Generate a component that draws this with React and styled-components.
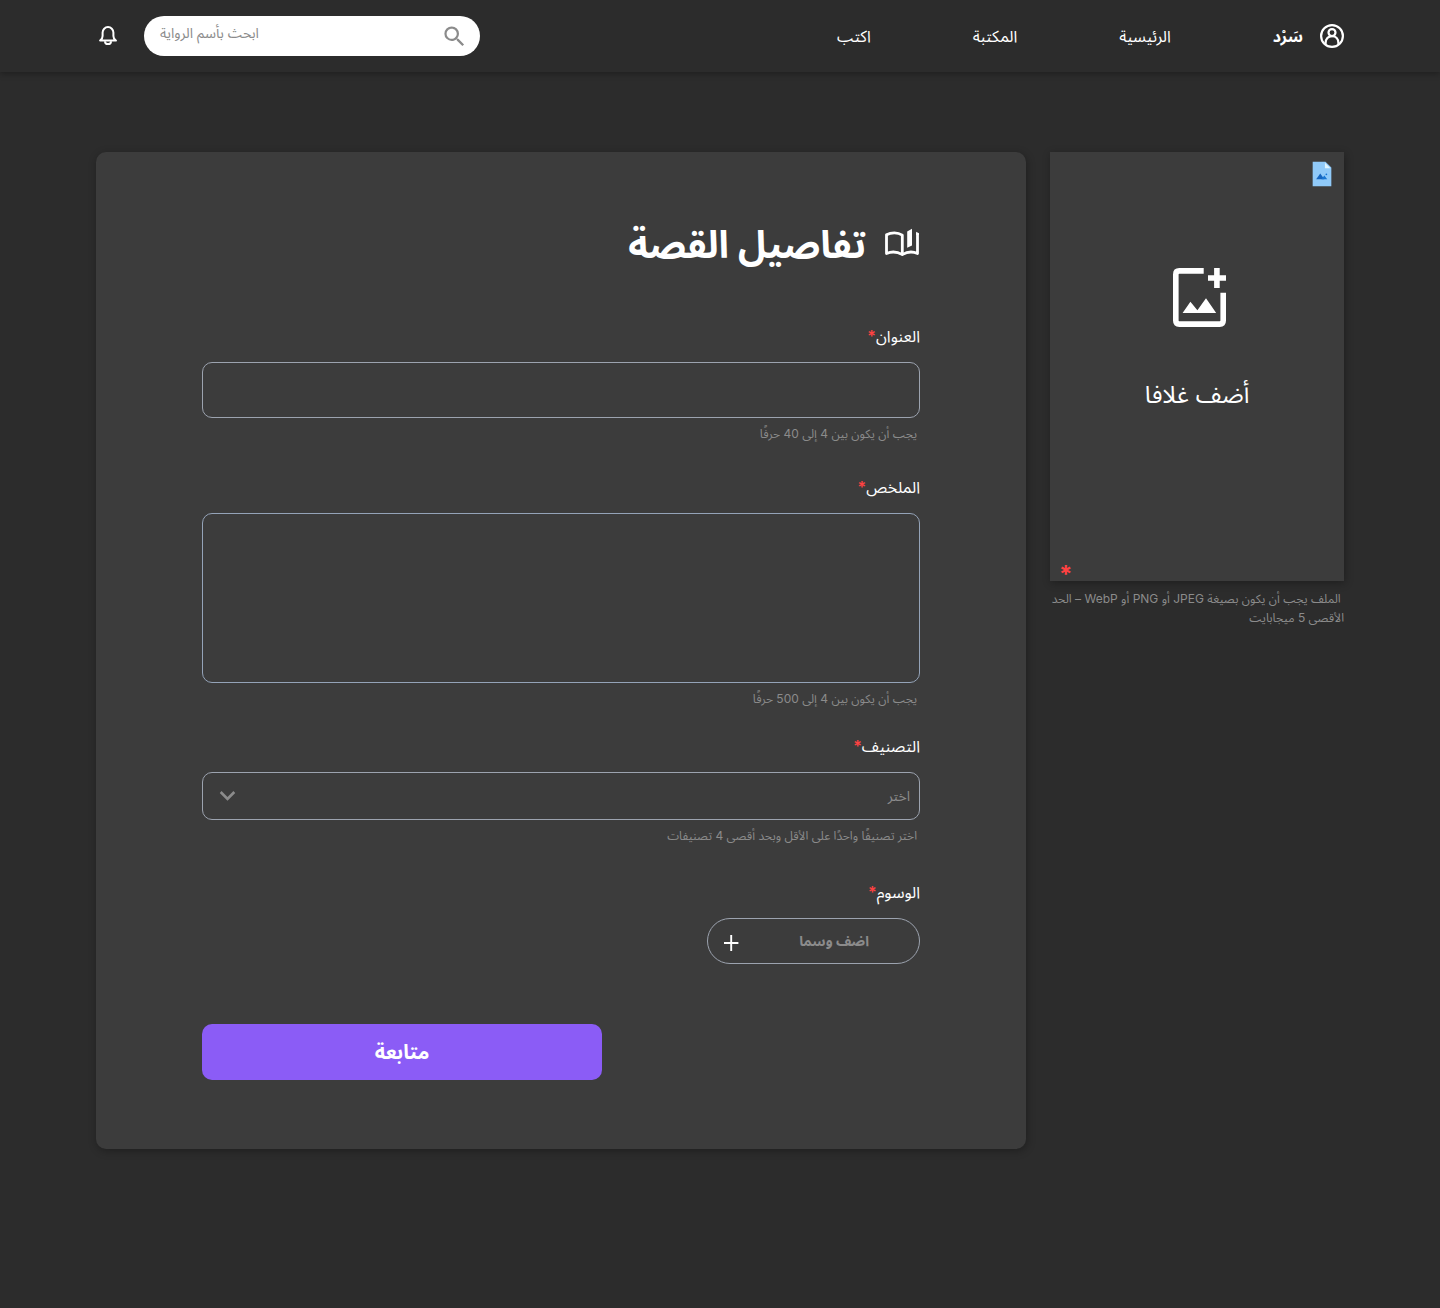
import React from "react";
import styled, { createGlobalStyle } from "styled-components";
import { MdSearch, MdKeyboardArrowDown } from "react-icons/md";
import { FcImageFile } from "react-icons/fc";

const Global = createGlobalStyle`
  * { box-sizing: border-box; }
  body { margin: 0; background: #2c2c2c; }
  svg { display: block; flex: none; }
  button, input, textarea { font-family: inherit; outline: none; }
`;

const Page = styled.div`
  min-height: 1308px;
  background: #2c2c2c;
  color: #fff;
  font-family: Inter, "Noto Sans Arabic", "Noto Sans", "DejaVu Sans", sans-serif;
`;

const Header = styled.header`
  height: 72px;
  padding: 0 96px;
  display: flex;
  align-items: center;
  justify-content: space-between;
  box-shadow: 0 2px 6px rgba(0, 0, 0, 0.3);
`;

const Nav = styled.nav`
  display: flex;
  align-items: center;
  gap: 102px;
  font-size: 16px;
  line-height: 22px;
`;

const NavLink = styled.a`
  color: #fff;
  text-decoration: none;
  padding-bottom: 1px;
`;

const Brand = styled.div`
  display: flex;
  align-items: center;
  gap: 17px;
  font-weight: 700;
`;

const Tools = styled.div`
  display: flex;
  align-items: center;
  gap: 24px;
`;

const Search = styled.label`
  width: 336px;
  height: 40px;
  padding: 0 12px 0 16px;
  display: flex;
  align-items: center;
  justify-content: space-between;
  direction: ltr;
  border-radius: 20px;
  background: #fff;
  color: #8b8b8b;
`;

const SearchText = styled.span`
  font-size: 14px;
  line-height: 20px;
  padding-bottom: 6px;
`;

const BellBox = styled.div`
  width: 24px;
  height: 24px;
  display: flex;
  align-items: center;
  justify-content: center;
`;

const Main = styled.main`
  display: flex;
  align-items: flex-start;
  gap: 24px;
  padding: 80px 96px;
`;

const Aside = styled.aside`
  width: 294px;
`;

const Cover = styled.div`
  position: relative;
  height: 429px;
  padding-top: 116px;
  display: flex;
  flex-direction: column;
  align-items: center;
  gap: 53px;
  background: #3c3c3c;
  box-shadow: 1px 2px 8px rgba(0, 0, 0, 0.3);
`;

const CoverArt = styled.div`
  padding-left: 4px;
`;

const CoverText = styled.span`
  font-size: 24px;
  line-height: 30px;
`;

const FileBadge = styled.span`
  position: absolute;
  top: 8px;
  right: 8px;
`;

const CoverStar = styled.span`
  position: absolute;
  left: 9px;
  bottom: -9px;
  color: #ff4242;
  font-size: 24px;
  font-weight: 700;
  line-height: 30px;
`;

const Hint = styled.p`
  margin: ${(p) => p.$top || 6}px 0 0;
  padding-right: ${(p) => p.$inset || 0}px;
  font-size: 12px;
  line-height: 19px;
  color: #8b8b8b;
`;

const Card = styled.section`
  width: 930px;
  height: 997px;
  padding: 67px 106px;
  display: flex;
  flex-direction: column;
  border-radius: 10px;
  background: #3c3c3c;
  box-shadow: 1px 2px 8px rgba(0, 0, 0, 0.3);
`;

const Title = styled.h1`
  margin: 0;
  display: flex;
  align-items: center;
  gap: 18px;
  font-size: 37.9px;
  font-weight: 700;
  line-height: 50px;

  svg {
    margin-bottom: 2px;
  }
`;

const Field = styled.div`
  margin-top: ${(p) => p.$gap}px;
`;

const Label = styled.div`
  font-size: 16px;
  line-height: 24px;
  margin-bottom: 14px;
`;

const Star = styled.span`
  color: #ff4242;
  font-weight: 600;
`;

const TextInput = styled.input`
  display: block;
  width: 100%;
  height: 56px;
  padding: 0 10px;
  border: 1px solid #9ca3af;
  border-radius: 10px;
  background: transparent;
  color: #fff;
  font-size: 16px;
`;

const TextArea = styled.textarea`
  display: block;
  width: 100%;
  height: 170px;
  padding: 10px;
  border: 1px solid #94a3b8;
  border-radius: 10px;
  background: transparent;
  color: #fff;
  font-size: 16px;
  resize: none;
`;

const Select = styled.button`
  width: 100%;
  height: 48px;
  padding: 0 9px;
  display: flex;
  align-items: center;
  justify-content: space-between;
  border: 1px solid #9ca3af;
  border-radius: 10px;
  background: transparent;
  color: #8b8b8b;
  font-size: 14px;

  svg {
    margin-bottom: 2px;
  }
`;

const TagButton = styled.button`
  width: 213px;
  height: 46px;
  padding: 1px 50px 0 16px;
  display: flex;
  align-items: center;
  justify-content: space-between;
  border: 1px solid #9ca3af;
  border-radius: 23px;
  background: transparent;
  color: #8b8b8b;
  font-size: 14px;
  font-weight: 700;

  svg {
    margin-top: 3px;
  }
`;

const Submit = styled.button`
  align-self: flex-end;
  width: 400px;
  height: 56px;
  margin-top: 60px;
  padding: 2px 0 0;
  border: 0;
  border-radius: 10px;
  background: #8b5cf6;
  color: #fff;
  font-size: 20px;
  font-weight: 700;
`;

const UserIcon = () => (
  <svg width="24" height="24" viewBox="0 0 24 24" fill="none" stroke="#fff" strokeWidth="2.2">
    <circle cx="12" cy="12" r="10.9" />
    <circle cx="12" cy="8.6" r="3.5" />
    <path d="M5.6 20.6V19C5.6 15 8.2 12.2 12 12.2s6.4 2.8 6.4 6.8v1.6" />
  </svg>
);

const BellIcon = () => (
  <svg width="18" height="20" viewBox="0 0 18 20" fill="none" stroke="#fff" strokeWidth="2" strokeLinejoin="round">
    <path d="M1.1 14.6C2.8 13.4 3.6 12 3.6 10V6.6a5.4 5.5 0 0 1 10.8 0V10c0 2 .8 3.4 2.5 4.6z" />
    <path d="M6 15.2a3 2.9 0 0 0 6 0" />
  </svg>
);

const BookIcon = () => (
  <svg width="36" height="30" viewBox="0 0 36 30" fill="none" stroke="#fff" strokeWidth="2.8" strokeLinejoin="round">
    <path d="M18.3 26.6V7.2Q14.8 4.9 10.4 4.9T2.5 6.8v18.7Q10.5 22 18.3 26.6 26 22 33.5 25.5V5.2" />
    <path d="M32.1 3.8 34.9 5.2V7h-2.8z" fill="#fff" stroke="none" />
    <path d="M23.2 3.4 28 .8v16.8l-4.8 2.1z" fill="#fff" stroke="none" />
  </svg>
);

const AddImageIcon = () => (
  <svg width="53" height="59" viewBox="0 0 53 59" fill="none" stroke="#fff" strokeWidth="5.6">
    <path d="M30.7 2.9H6.3Q2.8 2.9 2.8 6.4V52.6Q2.8 56.1 6.3 56.1H46.7Q50.2 56.1 50.2 52.6V24.8" />
    <path d="M43.9 0v20M35 10h18" />
    <path d="M9.6 45 17.4 33.7l7 8.6L33 30.3 43.2 45z" fill="#fff" stroke="none" />
  </svg>
);

const PlusIcon = () => (
  <svg width="15" height="16" viewBox="0 0 15 16" stroke="#fff" strokeWidth="1.9">
    <path d="M7.2 0v16M0 8h14.4" />
  </svg>
);

const Required = ({ children }) => (
  <Label>
    {children}
    <Star>*</Star>
  </Label>
);

export default function App() {
  return (
    <Page dir="rtl">
      <Global />
      <Header>
        <Nav>
          <Brand>
            <UserIcon />
            <span>سَرْد</span>
          </Brand>
          <NavLink>الرئيسية</NavLink>
          <NavLink>المكتبة</NavLink>
          <NavLink>اكتب</NavLink>
        </Nav>
        <Tools>
          <Search>
            <SearchText>ابحث بأسم الرواية</SearchText>
            <MdSearch size={27} />
          </Search>
          <BellBox>
            <BellIcon />
          </BellBox>
        </Tools>
      </Header>
      <Main>
        <Aside>
          <Cover>
            <FileBadge>
              <FcImageFile size={28} />
            </FileBadge>
            <CoverArt>
              <AddImageIcon />
            </CoverArt>
            <CoverText>أضف غلافا</CoverText>
            <CoverStar>*</CoverStar>
          </Cover>
          <Hint $top={8}>&nbsp;الملف يجب أن يكون بصيغة JPEG أو PNG أو WebP – الحد الأقصى 5 ميجابايت</Hint>
        </Aside>
        <Card>
          <Title>
            <BookIcon />
            <span>تفاصيل القصة</span>
          </Title>
          <Field $gap={55}>
            <Required>العنوان</Required>
            <TextInput />
            <Hint $inset={3}>يجب أن يكون بين 4 إلى 40 حرفًا</Hint>
          </Field>
          <Field $gap={32}>
            <Required>الملخص</Required>
            <TextArea />
            <Hint $inset={3}>يجب أن يكون بين 4 إلى 500 حرفًا</Hint>
          </Field>
          <Field $gap={26}>
            <Required>التصنيف</Required>
            <Select>
              <span>اختر</span>
              <MdKeyboardArrowDown size={31} />
            </Select>
            <Hint $inset={3}>اختر تصنيفًا واحدًا على الأقل وبحد أقصى 4 تصنيفات</Hint>
          </Field>
          <Field $gap={35}>
            <Required>الوسوم</Required>
            <TagButton>
              <span>اضف وسما</span>
              <PlusIcon />
            </TagButton>
          </Field>
          <Submit>متابعة</Submit>
        </Card>
      </Main>
    </Page>
  );
}
